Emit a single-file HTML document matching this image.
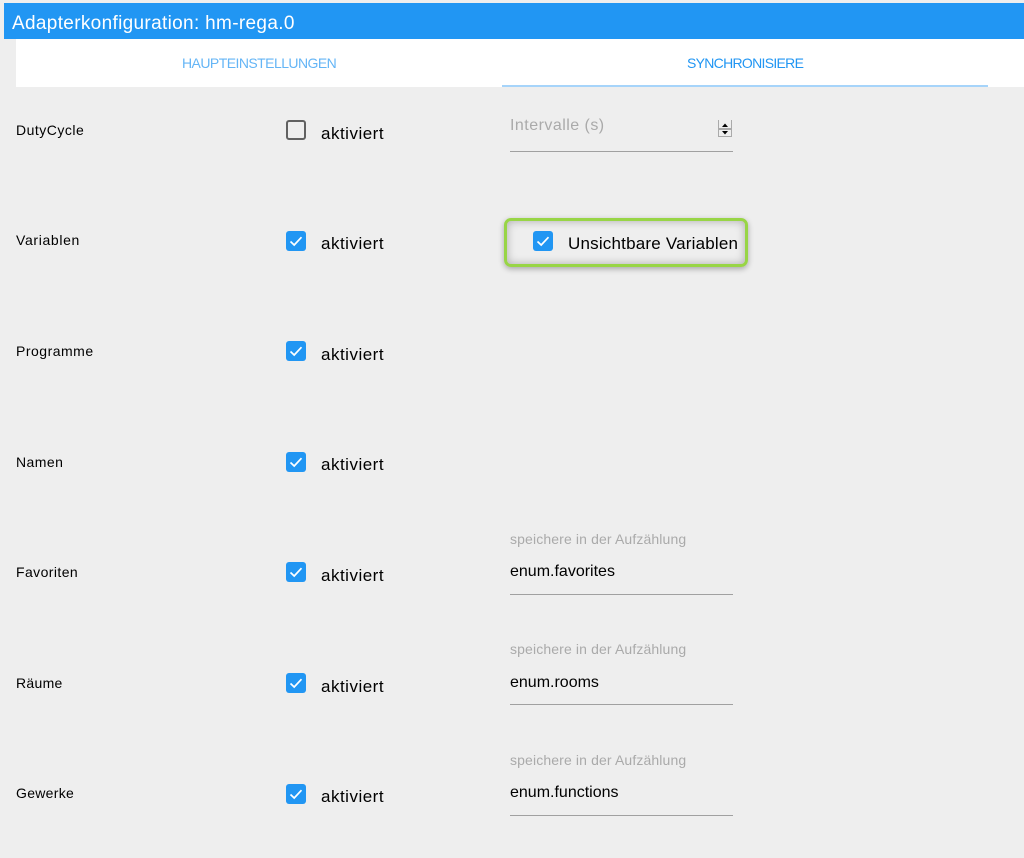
<!DOCTYPE html>
<html><head><meta charset="utf-8"><style>
html,body{margin:0;padding:0;width:1024px;height:858px;overflow:hidden;background:#eee}
body{position:relative;font-family:"Liberation Sans",sans-serif;color:#000}
.a{position:absolute;white-space:nowrap}
.lab{left:16px;font-size:14px;line-height:18px;letter-spacing:.5px}
.akt{left:321px;font-size:17px;line-height:20px;letter-spacing:.5px}
.cb{position:absolute;left:286px;width:20px;height:20px;background:#2196f3;border-radius:3px}
.cb svg{display:block;width:20px;height:20px}
.cap{left:510px;font-size:14px;line-height:16px;color:#aaa;letter-spacing:.13px}
.val{left:510px;font-size:16px;line-height:20px}
.ln{position:absolute;left:510px;width:223px;height:1px;background:#a0a0a0}
</style></head><body>
<div class="a" style="left:4px;top:3px;width:1020px;height:36px;background:#2196f3"></div>
<div class="a" style="left:12px;top:12px;font-size:19px;line-height:24px;color:#fff;letter-spacing:.33px">Adapterkonfiguration: hm-rega.0</div>
<div class="a" style="left:16px;top:39px;width:1008px;height:48px;background:#fff"></div>
<div class="a" style="left:502px;top:85px;width:486px;height:2px;background:#a6d4fa"></div>
<div class="a" style="left:182px;top:54px;font-size:14px;line-height:18px;color:#64b5f6;letter-spacing:-.55px">HAUPTEINSTELLUNGEN</div>
<div class="a" style="left:687px;top:54px;font-size:14px;line-height:18px;color:#2196f3;letter-spacing:-.7px">SYNCHRONISIERE</div>

<div class="a lab" style="top:121px">DutyCycle</div>
<div class="a lab" style="top:231px;letter-spacing:.65px">Variablen</div>
<div class="a lab" style="top:342px">Programme</div>
<div class="a lab" style="top:453px;letter-spacing:.45px">Namen</div>
<div class="a lab" style="top:563px;letter-spacing:.42px">Favoriten</div>
<div class="a lab" style="top:674px;letter-spacing:.3px">Räume</div>
<div class="a lab" style="top:784px;letter-spacing:.3px">Gewerke</div>

<div class="cb" style="top:120px;background:none;border:2px solid #616161;box-sizing:border-box"></div>
<div class="cb" style="top:231px"><svg viewBox="0 0 20 20"><path d="M4.500 10.500l3.700 3.500 7.300-7.800" fill="none" stroke="#fff" stroke-width="1.700"/></svg></div>
<div class="cb" style="top:341px"><svg viewBox="0 0 20 20"><path d="M4.500 10.500l3.700 3.500 7.300-7.800" fill="none" stroke="#fff" stroke-width="1.700"/></svg></div>
<div class="cb" style="top:452px"><svg viewBox="0 0 20 20"><path d="M4.500 10.500l3.700 3.500 7.300-7.800" fill="none" stroke="#fff" stroke-width="1.700"/></svg></div>
<div class="cb" style="top:562px"><svg viewBox="0 0 20 20"><path d="M4.500 10.500l3.700 3.500 7.300-7.800" fill="none" stroke="#fff" stroke-width="1.700"/></svg></div>
<div class="cb" style="top:673px"><svg viewBox="0 0 20 20"><path d="M4.500 10.500l3.700 3.500 7.300-7.800" fill="none" stroke="#fff" stroke-width="1.700"/></svg></div>
<div class="cb" style="top:784px"><svg viewBox="0 0 20 20"><path d="M4.500 10.500l3.700 3.500 7.300-7.800" fill="none" stroke="#fff" stroke-width="1.700"/></svg></div>

<div class="a akt" style="top:124px">aktiviert</div>
<div class="a akt" style="top:234px">aktiviert</div>
<div class="a akt" style="top:345px">aktiviert</div>
<div class="a akt" style="top:455px">aktiviert</div>
<div class="a akt" style="top:566px">aktiviert</div>
<div class="a akt" style="top:677px">aktiviert</div>
<div class="a akt" style="top:787px">aktiviert</div>

<div class="a" style="left:510px;top:116px;font-size:16px;line-height:20px;color:#aaa;letter-spacing:.47px">Intervalle (s)</div>
<div class="a" style="left:718px;top:120px;width:14px;height:17px;box-sizing:border-box;border:1px solid #aaa;border-top:none;background:#eee"></div>
<div class="a" style="left:718px;top:128px;width:14px;height:2px;background:#aaa"></div>
<svg class="a" style="left:718px;top:120px" width="14" height="17" viewBox="0 0 14 17"><path d="M7 3.500l-3 3.500h6zM4 11h6l-3 3.500z" fill="#000"/></svg>
<div class="ln" style="top:151px"></div>

<div class="a" style="left:504px;top:218px;width:244px;height:49px;box-sizing:border-box;border:3px solid #98d546;border-radius:7px;box-shadow:0 2px 6px rgba(0,0,0,.3),inset 0 0 9px rgba(0,0,0,.28)"></div>
<div class="cb" style="left:533px;top:231px"><svg viewBox="0 0 20 20"><path d="M4.500 10.500l3.700 3.500 7.300-7.800" fill="none" stroke="#fff" stroke-width="1.700"/></svg></div>
<div class="a" style="left:568px;top:234px;font-size:17px;line-height:20px;letter-spacing:.2px">Unsichtbare Variablen</div>

<div class="a cap" style="top:531px">speichere in der Aufzählung</div>
<div class="a val" style="top:562px">enum.favorites</div>
<div class="ln" style="top:594px"></div>
<div class="a cap" style="top:641px">speichere in der Aufzählung</div>
<div class="a val" style="top:673px">enum.rooms</div>
<div class="ln" style="top:704px"></div>
<div class="a cap" style="top:752px">speichere in der Aufzählung</div>
<div class="a val" style="top:783px">enum.functions</div>
<div class="ln" style="top:815px"></div>
</body></html>
